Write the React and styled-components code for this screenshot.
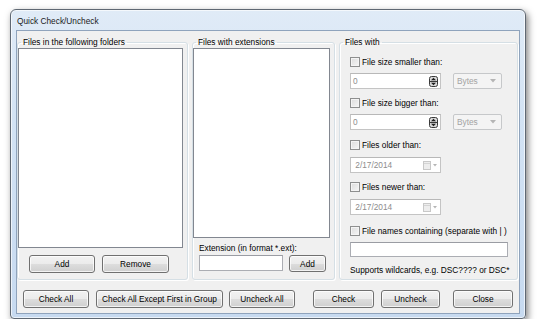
import styled, { createGlobalStyle } from 'styled-components';

const GlobalStyle = createGlobalStyle`
  html, body {
    margin: 0;
    background: #ffffff;
  }
  body {
    font-family: "Liberation Sans", Arial, sans-serif;
    font-size: 8.3px;
    color: #000;
  }
`;

const Window = styled.div`
  box-sizing: border-box;
  margin: 9px 0 0 10px;
  width: 516px;
  height: 310px;
  padding: 0 5px 4px;
  border: 1px solid #5f6873;
  border-radius: 6px 6px 4px 4px;
  background: linear-gradient(#e0ebf7, #d3e3f4 35%, #c7daf0);
  box-shadow: 2px 3px 7px rgba(0, 0, 0, 0.5), inset 0 0 0 1px rgba(255, 255, 255, 0.65);
  display: flex;
  flex-direction: column;
`;

const TitleBar = styled.div`
  height: 19px;
  display: flex;
  align-items: center;
  padding: 1px 0 0 1px;
  color: #1a1a1a;
`;

const Client = styled.div`
  flex: 1;
  border: 1px solid #8fa3bc;
  background: #f0f0f0;
  display: flex;
  flex-direction: column;
  padding-top: 6px;
`;

const Groups = styled.div`
  display: grid;
  grid-template-columns: 171px 143px 179px;
  column-gap: 4px;
  height: 243px;
`;

const Group = styled.fieldset`
  margin: 0;
  padding: 0 ${(p) => p.$padRight || 0}px 0 ${(p) => p.$padLeft || 0}px;
  min-width: 0;
  border: 1px solid #d5dfe5;
  border-radius: 3px;
  box-shadow: inset 1px 1px 0 #ffffff, 1px 1px 0 #ffffff;
  display: flex;
  flex-direction: column;

  legend {
    margin-left: ${(p) => 3 - (p.$padLeft || 0)}px;
    padding: 0 2px;
    line-height: 10px;
    color: #000;
  }
`;

const ListBox = styled.div`
  margin-top: 1px;
  width: ${(p) => p.$w}px;
  height: ${(p) => p.$h}px;
  box-sizing: border-box;
  border: 1px solid #828790;
  background: #ffffff;
`;

const Button = styled.button`
  box-sizing: border-box;
  width: ${(p) => p.$w}px;
  height: ${(p) => p.$h || 18}px;
  padding: 0;
  font: inherit;
  color: #000;
  border: 1px solid #707070;
  border-radius: 3px;
  background: linear-gradient(#f2f2f2 0%, #ebebeb 50%, #dddddd 51%, #cfcfcf 100%);
  box-shadow: inset 0 0 0 1px rgba(255, 255, 255, 0.75);
`;

const ButtonRow = styled.div`
  display: flex;
  gap: ${(p) => p.$gap || 7}px;
  margin-top: ${(p) => p.$top || 0}px;
  padding-left: ${(p) => p.$left || 0}px;
`;

const FieldLabel = styled.div`
  margin-top: 4px;
  padding-left: 6px;
  line-height: 12px;
`;

const TextBox = styled.div`
  box-sizing: border-box;
  width: ${(p) => p.$w}px;
  height: ${(p) => p.$h || 16}px;
  margin-top: ${(p) => p.$top || 0}px;
  border: 1px solid ${(p) => (p.$disabled ? '#c4c4c4' : '#abadb3')};
  border-top-color: ${(p) => (p.$disabled ? '#b8b8b8' : '#9a9ca3')};
  background: #ffffff;
  color: #8d8d8d;
  display: flex;
  align-items: center;
  padding: 0 2px;
  gap: 2px;
`;

const Value = styled.span`
  flex: 1;
`;

const CheckRow = styled.label`
  display: flex;
  align-items: center;
  gap: 2px;
  height: 12px;
  margin-top: ${(p) => p.$top}px;
`;

const CheckBox = styled.span`
  box-sizing: border-box;
  width: 10px;
  height: 10px;
  border: 1px solid #8e8f8f;
  background: linear-gradient(135deg, #dcdcdc, #f6f6f6);
  box-shadow: inset 0 0 0 1px #f4f4f4;
`;

const SizeRow = styled.div`
  display: flex;
  align-items: center;
  gap: 12px;
  margin-top: ${(p) => p.$top}px;
`;

const Combo = styled.div`
  box-sizing: border-box;
  width: 49px;
  height: 16px;
  border: 1px solid #c6c8ca;
  border-radius: 2px;
  background: #f4f4f4;
  color: #a3a3a3;
  display: flex;
  align-items: center;
  justify-content: space-between;
  padding: 0 5px 0 3px;
`;

const Hint = styled.div`
  margin-top: 7px;
  line-height: 12px;
`;

const BottomBar = styled.div`
  display: flex;
  margin-top: 10px;
  padding-left: 6px;
`;

const Spinner = () => (
  <svg width="9" height="11" viewBox="0 0 9 11">
    <rect x="0.5" y="0.5" width="8" height="10" rx="2" fill="#d8d8d8" stroke="#3a3a3a" />
    <line x1="1" y1="5.5" x2="8" y2="5.5" stroke="#3a3a3a" />
    <path d="M2 4.3 L4.5 1.8 L7 4.3 Z" fill="#1e1e1e" />
    <path d="M2 6.7 L4.5 9.2 L7 6.7 Z" fill="#1e1e1e" />
  </svg>
);

const SmallArrow = () => (
  <svg width="6" height="4" viewBox="0 0 6 4">
    <path d="M0 0 L6 0 L3 3.5 Z" fill="#b5b5b5" />
  </svg>
);

const CalendarIcon = () => (
  <svg width="15" height="9" viewBox="0 0 15 9">
    <rect x="0.5" y="0.5" width="7" height="8" fill="#ededed" stroke="#c8c8c8" />
    <line x1="1" y1="2.5" x2="7" y2="2.5" stroke="#d4d4d4" />
    <path d="M10 3 L14 3 L12 5.5 Z" fill="#b5b5b5" />
  </svg>
);

const SizeField = () => (
  <SizeRow $top={5}>
    <TextBox $w={91} $disabled>
      <Value>0</Value>
      <Spinner />
    </TextBox>
    <Combo>
      <span>Bytes</span>
      <SmallArrow />
    </Combo>
  </SizeRow>
);

const DateField = () => (
  <TextBox $w={91} $top={6} $disabled>
    <Value>&nbsp;2/17/2014</Value>
    <CalendarIcon />
  </TextBox>
);

const App = () => {
  return (
    <>
      <GlobalStyle />
      <Window>
        <TitleBar>Quick Check/Uncheck</TitleBar>
        <Client>
          <Groups>
            <Group $padRight={4}>
              <legend>Files in the following folders</legend>
              <ListBox $w={165} $h={200} />
              <ButtonRow $top={7} $left={11}>
                <Button $w={66}>Add</Button>
                <Button $w={67}>Remove</Button>
              </ButtonRow>
            </Group>

            <Group>
              <legend>Files with extensions</legend>
              <ListBox $w={137} $h={190} />
              <FieldLabel>Extension (in format *.ext):</FieldLabel>
              <ButtonRow $top={1} $left={6} $gap={6}>
                <TextBox $w={84} />
                <Button $w={37} $h={17}>Add</Button>
              </ButtonRow>
            </Group>

            <Group $padLeft={10}>
              <legend>Files with</legend>
              <CheckRow $top={9}>
                <CheckBox />
                File size smaller than:
              </CheckRow>
              <SizeField />
              <CheckRow $top={8}>
                <CheckBox />
                File size bigger than:
              </CheckRow>
              <SizeField />
              <CheckRow $top={9}>
                <CheckBox />
                Files older than:
              </CheckRow>
              <DateField />
              <CheckRow $top={8}>
                <CheckBox />
                Files newer than:
              </CheckRow>
              <DateField />
              <CheckRow $top={10}>
                <CheckBox />
                File names containing (separate with | )
              </CheckRow>
              <TextBox $w={158} $top={5} $h={15} />
              <Hint>Supports wildcards, e.g. DSC???? or DSC*</Hint>
            </Group>
          </Groups>

          <BottomBar>
            <ButtonRow>
              <Button $w={66}>Check All</Button>
              <Button $w={127}>Check All Except First in Group</Button>
              <Button $w={66} style={{ marginLeft: -1 }}>Uncheck All</Button>
            </ButtonRow>
            <ButtonRow $left={18}>
              <Button $w={61}>Check</Button>
              <Button $w={59}>Uncheck</Button>
              <Button $w={60} style={{ marginLeft: 6 }}>Close</Button>
            </ButtonRow>
          </BottomBar>
        </Client>
      </Window>
    </>
  );
};

export default App;
